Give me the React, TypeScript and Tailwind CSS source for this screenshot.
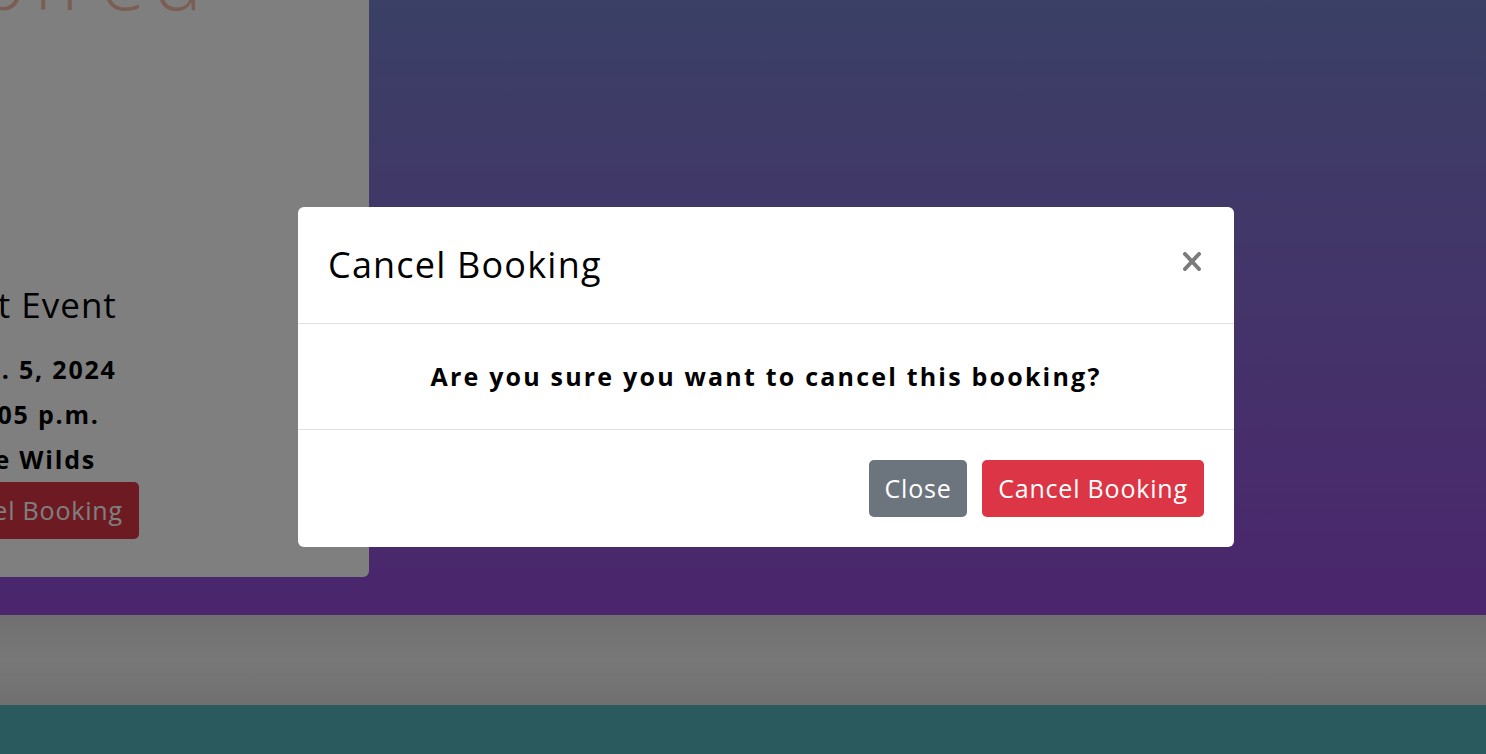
import React from "react";

const font = { fontFamily: "'Open Sans', 'Noto Sans', sans-serif" };

export default function App() {
  return (
    <div className="relative w-full h-[754px] overflow-hidden flex flex-col" style={font}>
      <section className="h-[615px] shrink-0 bg-gradient-to-b from-[#7480cc] to-[#964ada]">
        <div className="w-[682px] h-[600px] mt-[-23px] ml-[-313px] bg-white rounded-br-[6px] flex flex-col items-center text-center text-black">
          <div className="mt-[-40px] h-[82px] text-[82px] leading-none font-light tracking-[8px] text-[#f6bca6]">
            Inspired
          </div>
          <h2 className="mt-[264px] text-[35px] leading-[44px] font-normal tracking-[1px]">Test Event</h2>
          <div className="mt-[20px] flex flex-col text-[25px] font-bold leading-[45px] tracking-[1.8px]">
            <p>Sept. 5, 2024</p>
            <p>12:05 p.m.</p>
            <p>The Wilds</p>
          </div>
          <button className="h-[57px] w-[222px] rounded-[5px] bg-[#dc3545] text-white text-[25px] tracking-[0.8px]">
            Cancel Booking
          </button>
        </div>
      </section>
      <div className="h-[90px] shrink-0 bg-gradient-to-b from-[#e0e0e0] via-[#f0f0f0] to-[#e0e0e0]" />
      <footer className="flex-1 bg-[#55b4bb]" />

      <div className="absolute inset-0 bg-black/50">
        <div className="ml-[298px] mt-[207px] w-[936px] bg-white rounded-[6px] flex flex-col">
          <div className="h-[117px] px-[30px] flex items-center justify-between border-b border-[#dee2e6]">
            <h5 className="text-[36px] font-normal tracking-[1.2px] text-black">Cancel Booking</h5>
            <button className="w-[20px] h-[20px] mr-[2px] mt-[-7px] flex items-center justify-center" aria-label="Close">
              <svg width="18" height="19" viewBox="0 0 18 19">
                <path d="M2 2 L16 17 M16 2 L2 17" stroke="#7b7b7b" strokeWidth="4" strokeLinecap="round" />
              </svg>
            </button>
          </div>
          <div className="h-[106px] flex items-center justify-center border-b border-[#dee2e6]">
            <p className="text-[25px] font-bold tracking-[2.2px] text-black">Are you sure you want to cancel this booking?</p>
          </div>
          <div className="px-[30px] py-[30px] flex justify-end gap-[15px]">
            <button className="h-[57px] w-[98px] rounded-[5px] bg-[#6c757d] text-white text-[25px] tracking-[0.8px]">Close</button>
            <button className="h-[57px] w-[222px] rounded-[5px] bg-[#dc3545] text-white text-[25px] tracking-[0.8px]">Cancel Booking</button>
          </div>
        </div>
      </div>
    </div>
  );
}
